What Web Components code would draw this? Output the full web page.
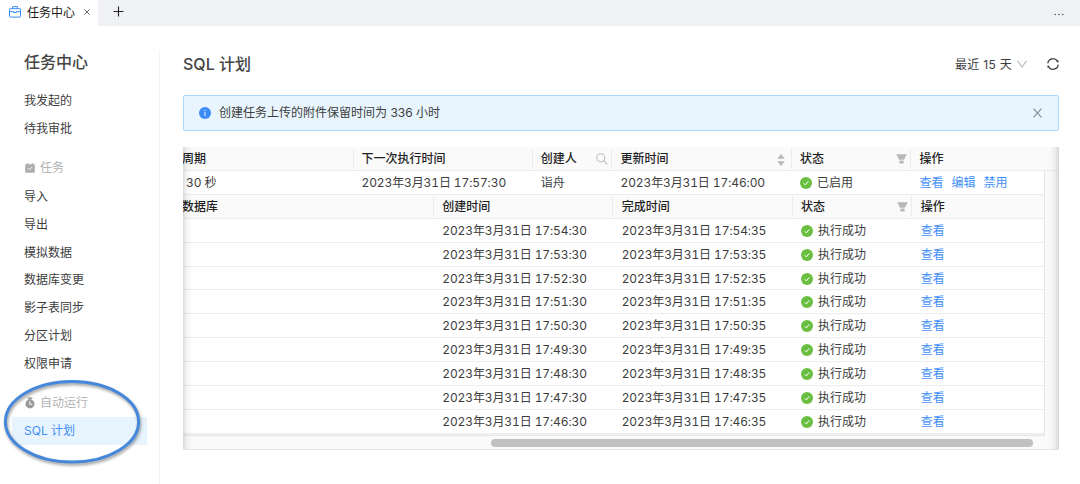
<!DOCTYPE html>
<html lang="zh-CN">
<head>
<meta charset="utf-8">
<title>任务中心</title>
<style>
  body {
    margin: 0;
    background: #fff;
    color: #3d3d3d;
    font: 12px/20px Inter, "Noto Sans CJK SC", sans-serif;
  }
</style>
</head>
<body>
<task-app></task-app>

<script>
const MENU = [
  { items: ['我发起的', '待我审批'] },
  { title: '任务', icon: 'task', items: ['导入', '导出', '模拟数据', '数据库变更', '影子表同步', '分区计划', '权限申请'] },
  { title: '自动运行', icon: 'timer', items: ['SQL 计划'] },
];

const MINUTES = [54, 53, 52, 51, 50, 49, 48, 47, 46];

const ICONS = {
  briefcase: `<svg width="12" height="12" viewBox="0 0 12 12" fill="none" stroke="#3b8cf5" stroke-width="1">
    <rect x=".5" y="2.7" width="11" height="8.4" rx=".6"/><path d="M3.6 2.7V.6h4.8v2.1M.5 5.7h4.2M7.3 5.7h4.2M4.7 5.2v1.3h2.6V5.2"/></svg>`,
  close: `<svg width="6" height="6" viewBox="0 0 6 6" fill="none" stroke="#555" stroke-width=".9"><path d="M.4.4l5.2 5.2M5.6.4.4 5.6"/></svg>`,
  plus: `<svg width="11" height="11" viewBox="0 0 11 11" stroke="#222" stroke-width="1.1"><path d="M5.500.500v10M.5 5.500h10"/></svg>`,
  more: `<svg width="10" height="3" viewBox="0 0 10 3" fill="#555"><circle cx="1.2" cy="1.5" r=".8"/><circle cx="5" cy="1.5" r=".8"/><circle cx="8.8" cy="1.5" r=".8"/></svg>`,
  task: `<svg width="10" height="10" viewBox="0 0 10 10"><path fill="#adadad" d="M.6 1.2h1.5V.1h1.2v1.1h3.4V.1h1.2v1.1h1.5a.4.4 0 0 1 .4.4v7.7a.4.4 0 0 1-.4.4H.6a.4.4 0 0 1-.4-.4V1.6a.4.4 0 0 1 .4-.4z"/><path d="M2.8 5.2l1.6 1.6 2.9-3" fill="none" stroke="#fff" stroke-width="1"/></svg>`,
  timer: `<svg width="10" height="12" viewBox="0 0 10 12"><path fill="#999" d="M2.6.4h4.8v1.3H2.6z"/><path fill="#999" d="M3.4 1.5h3.2v1.3H3.4z"/><circle cx="5" cy="6.9" r="4.5" fill="#999"/><path d="M4.8 4.2v3.1h2.4" fill="none" stroke="#fff" stroke-width="1"/></svg>`,
  down: `<svg width="10" height="8" viewBox="0 0 10 8" fill="none" stroke="#b5b5b5" stroke-width="1.1"><path d="M.5.8 5 7l4.500-6.200"/></svg>`,
  reload: `<svg width="12" height="12" viewBox="0 0 12 12" fill="none" stroke="#333" stroke-width="1.1"><path d="M.8 5.400A5.200 5.200 0 0 1 10.600 3.600M11.200 6.600A5.200 5.200 0 0 1 1.400 8.400"/><path d="M11.500 1.900v2.500L9.200 3.900zM.5 10.100V7.600l2.300.5z" fill="#333" stroke="none"/></svg>`,
  info: `<svg width="12" height="12" viewBox="0 0 12 12"><circle cx="6" cy="6" r="6" fill="#3b8cf8"/><path d="M6 5v4.200" stroke="#fff" stroke-width=".9"/><circle cx="6" cy="3.400" r=".6" fill="#fff"/></svg>`,
  dismiss: `<svg width="9" height="10" viewBox="0 0 9 10" fill="none" stroke="#808a91" stroke-width="1.1"><path d="M.5.600l8 8.800M8.500.600l-8 8.800"/></svg>`,
  search: `<svg width="12" height="12" viewBox="0 0 12 12" fill="none" stroke="#bfbfbf" stroke-width="1.1"><circle cx="4.800" cy="4.800" r="4"/><path d="M7.700 7.700l3.600 3.600"/></svg>`,
  sort: `<svg width="8" height="12" viewBox="0 0 8 12" fill="#b8b8b8"><path d="M4 0l3.800 4.700H.2zM4 12l3.800-4.700H.2z"/></svg>`,
  filter: `<svg width="11" height="10" viewBox="0 0 11 10" fill="#b8b8b8"><path d="M.2.2h10.600L7.900 5.800H3.100z"/><path d="M3.400 6.600h4.200v2.900H3.400z"/></svg>`,
  check: `<svg width="12" height="12" viewBox="0 0 12 12"><circle cx="6" cy="6" r="6" fill="#6abf40"/><path d="M3.700 6.200l1.600 1.700 3-3.600" fill="none" stroke="#fff" stroke-width="1"/></svg>`,
};

class UiIcon extends HTMLElement {
  connectedCallback() {
    this.attachShadow({ mode: 'open' }).innerHTML = `
      <style>:host { display: inline-flex; flex: none; } svg { display: block; }</style>
      ${ICONS[this.getAttribute('name')]}`;
  }
}

class TabBar extends HTMLElement {
  connectedCallback() {
    this.attachShadow({ mode: 'open' }).innerHTML = `
      <style>
        :host { display: flex; align-items: center; height: 26px; background: #eff1f5; color: #1a1a1a; }
        .tab { display: flex; align-items: center; box-sizing: border-box; width: 98px; height: 26px; padding: 0 0 2px 9px; background: #fff; }
        .tab span { margin: 1px 9px 0 6px; }
        .add { margin: 0 auto 3px 15px; }
        .more { margin: 2px 16px 0 0; }
      </style>
      <div class="tab"><ui-icon name="briefcase"></ui-icon><span><slot></slot></span><ui-icon name="close"></ui-icon></div>
      <ui-icon class="add" name="plus"></ui-icon>
      <ui-icon class="more" name="more"></ui-icon>`;
  }
}

class SideMenu extends HTMLElement {
  connectedCallback() {
    const groups = MENU.map(g => `
      <section>
        ${g.title ? `<h3><ui-icon name="${g.icon}"></ui-icon>${g.title}</h3>` : ''}
        ${g.items.map(i => `<a class="${i === 'SQL 计划' ? 'active' : ''}">${i}</a>`).join('')}
      </section>`).join('');

    this.attachShadow({ mode: 'open' }).innerHTML = `
      <style>
        :host { display: block; position: relative; box-sizing: border-box; width: 160px; padding: 0 13px 0 12px; }
        .line { position: absolute; right: 0; top: 24px; bottom: 0; width: 1px; background: #f3f3f3; }
        h2 { margin: 24px 0 12px 12px; font-size: 16px; line-height: 24px; font-weight: 500; color: #454545; }
        section + section { margin-top: 12px; }
        h3 { display: flex; align-items: center; gap: 5px; margin: 0; padding-left: 13px; height: 28px; font-size: 12px; font-weight: 400; color: #b3b3b3; }
        a { display: block; box-sizing: border-box; padding: 1px 0 0 12px; height: 27.9px; line-height: 28px; }
        .active { padding-top: 0; background: #e7f4fe; color: #4390f8; }
        .mark { position: absolute; left: 0; top: 350px; overflow: visible; filter: drop-shadow(1px 2px 1.5px rgba(0,0,0,.4)); }
      </style>
      <div class="line"></div>
      <h2><slot></slot></h2>
      ${groups}
      <svg class="mark" width="150" height="94" viewBox="0 0 150 94" fill="none"><ellipse cx="72" cy="45.700" rx="66.600" ry="40.300" stroke="#4587da" stroke-width="3"/></svg>`;
  }
}

class InfoAlert extends HTMLElement {
  connectedCallback() {
    this.attachShadow({ mode: 'open' }).innerHTML = `
      <style>
        :host { display: flex; align-items: center; box-sizing: border-box; height: 36px; padding: 0 16px 0 15px; border: 1px solid #a9d8fc; border-radius: 2px; background: #e8f5fe; }
        span { flex: 1; margin-left: 8px; }
      </style>
      <ui-icon name="info"></ui-icon><span><slot></slot></span><ui-icon name="dismiss"></ui-icon>`;
  }
}

// One table line; cells are slotted, "head" and "inner" pick the look and the column set
class TableRow extends HTMLElement {
  connectedCallback() {
    this.attachShadow({ mode: 'open' }).innerHTML = `
      <style>
        :host {
          display: grid; grid-template-columns: 170.500px 179.300px 79.700px 179.400px 119.600px 1fr;
          box-sizing: border-box; height: 23.920px; width: 861px;
          border-bottom: 1px solid #ededed; background: #fff;
          letter-spacing: -.12px; font-variant-numeric: tabular-nums;
        }
        :host([inner]) { grid-template-columns: 250.800px 179.400px 179.400px 119.600px 1fr; }
        :host([head]) { background: #fafafa; color: #1f1f1f; font-weight: 500; letter-spacing: 0; }
        :host([head]:not([inner])) { width: 876px; }
        ::slotted(div) { display: flex; align-items: center; box-sizing: border-box; margin: 2px 0; padding: 0 8px; white-space: pre; }
        :host([inner]) ::slotted(div) { padding-left: 8.500px; }
        ::slotted(div:first-child) { padding-left: 0 !important; margin-left: -1px; }
        :host([head]) ::slotted(div:not(:last-child)) { border-right: 1px solid #ebebeb; padding-right: 3px; }
        :host([head]) ::slotted(div) { justify-content: space-between; }
      </style>
      <slot></slot>`;
  }
}

class StatusText extends HTMLElement {
  connectedCallback() {
    this.attachShadow({ mode: 'open' }).innerHTML = `
      <style>:host { display: flex; align-items: center; gap: 5px; letter-spacing: 0; }</style>
      <ui-icon name="check"></ui-icon><span><slot></slot></span>`;
  }
}

class PlanTable extends HTMLElement {
  connectedCallback() {
    const rows = MINUTES.map(m => `
      <table-row inner>
        <div></div><div>2023年3月31日 17:${m}:30</div><div>2023年3月31日 17:${m}:35</div>
        <div><status-text>执行成功</status-text></div><div><a>查看</a></div>
      </table-row>`).join('');

    this.attachShadow({ mode: 'open' }).innerHTML = `
      <style>
        :host { display: block; position: relative; box-sizing: border-box; height: 303px; overflow: hidden; background: #fafafa; border-bottom: 1px solid #e3e3e3; }
        .body { width: 861px; border-right: 1px solid #e6e6e6; border-bottom: 1px solid #e6e6e6; padding-bottom: 1px; background: #f2f2f2; }
        .track { padding: 3px 26px 0 308px; }
        .thumb { height: 8px; border-radius: 4px; background: #c1c1c1; }
        .links { gap: 8px; }
        .period { margin-left: 4px; }
        .sorter { margin: 2px 3px 0 0; }
        a { color: #4390f8; letter-spacing: 0; }
        .shade { position: absolute; top: 0; bottom: -1px; width: 10px; }
        .left { left: 0; background: linear-gradient(to right, rgba(0,0,0,.13), rgba(0,0,0,.04) 40%, transparent); }
        .right { right: 0; background: linear-gradient(to left, rgba(0,0,0,.15), rgba(0,0,0,.05) 40%, transparent); }
      </style>
      <table-row head>
        <div>周期</div><div>下一次执行时间</div><div>创建人<ui-icon name="search"></ui-icon></div>
        <div>更新时间<ui-icon class="sorter" name="sort"></ui-icon></div>
        <div>状态<ui-icon name="filter"></ui-icon></div><div>操作</div>
      </table-row>
      <div class="body">
        <table-row>
          <div><span class="period">30 秒</span></div><div>2023年3月31日 17:57:30</div><div>诣舟</div><div>2023年3月31日 17:46:00</div>
          <div><status-text>已启用</status-text></div><div class="links"><a>查看</a><a>编辑</a><a>禁用</a></div>
        </table-row>
        <table-row head inner>
          <div>数据库</div><div>创建时间</div><div>完成时间</div>
          <div>状态<ui-icon name="filter"></ui-icon></div><div>操作</div>
        </table-row>
        ${rows}
      </div>
      <div class="track"><div class="thumb"></div></div>
      <div class="shade left"></div>
      <div class="shade right"></div>`;
  }
}

class TaskApp extends HTMLElement {
  connectedCallback() {
    this.attachShadow({ mode: 'open' }).innerHTML = `
      <style>
        :host { display: flex; flex-direction: column; height: 484px; overflow: hidden; }
        .page { flex: 1; display: flex; min-height: 0; }
        main { flex: 1; min-width: 0; padding: 24px 21px 0 23px; }
        header { display: flex; align-items: center; height: 28px; margin-bottom: 17px; }
        h1 { flex: 1; margin: 0; font-size: 16px; font-weight: 500; color: #454545; }
        .range { margin: 1px 5px 0 0; letter-spacing: .3px; }
        .reload { margin-left: 20px; }
        plan-table { margin-top: 16px; }
      </style>
      <tab-bar>任务中心</tab-bar>
      <div class="page">
        <side-menu>任务中心</side-menu>
        <main>
          <header>
            <h1>SQL 计划</h1>
            <span class="range">最近 15 天</span><ui-icon name="down"></ui-icon>
            <ui-icon class="reload" name="reload"></ui-icon>
          </header>
          <info-alert>创建任务上传的附件保留时间为 336 小时</info-alert>
          <plan-table></plan-table>
        </main>
      </div>`;
  }
}

customElements.define('ui-icon', UiIcon);
customElements.define('tab-bar', TabBar);
customElements.define('side-menu', SideMenu);
customElements.define('info-alert', InfoAlert);
customElements.define('table-row', TableRow);
customElements.define('status-text', StatusText);
customElements.define('plan-table', PlanTable);
customElements.define('task-app', TaskApp);
</script>
</body>
</html>
